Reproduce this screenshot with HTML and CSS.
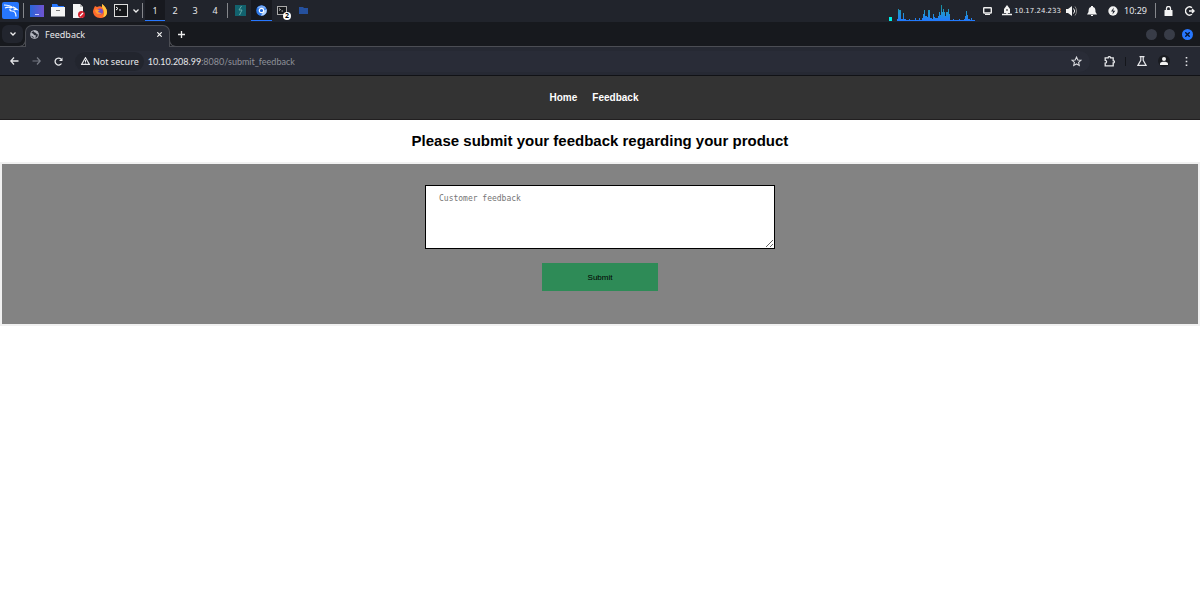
FILE: index.html
```
<!DOCTYPE html>
<html lang="en">
<head>
    <meta charset="UTF-8">
    <meta name="viewport" content="width=device-width, initial-scale=1.0">
    <title>Feedback</title>
    <link rel="stylesheet" href="styles.css">
</head>
<body>
    <!-- desktop panel -->
    <div class="panel">
        <button type="button" class="cell" aria-label="Applications">
            <svg width="17" height="17" viewBox="0 0 17 17"><rect width="17" height="17" rx="2" fill="#2777ff"/><path d="M2 3c3 0 6 0 8.500 2.500M3 6c2-1 5-1 7 0M9.500 5.500C7 7 7.500 9 10 9c2.500 0 4 2 4 5.500M10.500 5.500c2 0 3 .500 4.500 2-1.500-.300-2.500 0-3.500.500" fill="none" stroke="#fff" stroke-width="1.200"/><path d="M11 4l3.500 2.500-3-.3z" fill="#fff"/></svg>
        </button>
        <span class="divider"></span>
        <button type="button" class="cell" aria-label="Show desktop">
            <svg width="14" height="12" viewBox="0 0 14 12"><defs><linearGradient id="desk" x2="1"><stop stop-color="#2865d8"/><stop offset="1" stop-color="#7053d0"/></linearGradient></defs><rect width="14" height="12" fill="url(#desk)"/><path d="M5 9.500h4" stroke="#cfd5ff"/></svg>
        </button>
        <button type="button" class="cell" aria-label="Files">
            <svg width="14" height="13" viewBox="0 0 14 13"><path d="M1 0h5l1.500 2H13v4H1z" fill="#2777ff"/><path d="M0 3h14v9.500H0z" fill="#f4f4f4"/><path d="M5 6.500h4" stroke="#777"/></svg>
        </button>
        <button type="button" class="cell" aria-label="Text editor">
            <svg width="13" height="14" viewBox="0 0 13 14"><path d="M1 0h7l3 3v11H1z" fill="#f5f5f5"/><path d="M8 0v3h3" fill="#bbb"/><circle cx="9.500" cy="10.500" r="3.500" fill="#d5212e"/><path d="M8 12l3-3" stroke="#fff" stroke-width="1.200"/></svg>
        </button>
        <button type="button" class="cell" aria-label="Firefox">
            <svg width="14" height="14" viewBox="0 0 14 14"><path d="M1 4l1-2 2 1c2-1 4-1 5 0l0-3c3 2 5 5 5 8 0 4-3 6-7 6S0 11 0 7z" fill="#ff6b2c"/><path d="M9 0c3 2 5 5 5 8 0 3-2 5-4 5 2-3 1-7-1-10z" fill="#ffc63d"/><circle cx="7" cy="7.500" r="3" fill="#7351c7"/><path d="M2 6c2-1 3 0 5 0-1 1-2 1-2 2 2 1 3 1 4 1-3 3-7 0-7-3z" fill="#ff9b32"/></svg>
        </button>
        <button type="button" class="cell" aria-label="Terminal">
            <svg width="14" height="13" viewBox="0 0 14 13"><rect x=".5" y=".5" width="13" height="12" fill="#15171b" stroke="#dcdcdc"/><path d="M2 3l2 1.500L2 6M5 6h2" fill="none" stroke="#fff"/></svg>
        </button>
        <button type="button" class="more" aria-label="More terminals">
            <svg width="6" height="4" viewBox="0 0 6 4"><path d="M.5.500L3 3 5.500.500" fill="none" stroke="#eee" stroke-width="1.300"/></svg>
        </button>
        <span class="divider"></span>
        <button type="button" class="workspace active">1</button>
        <button type="button" class="workspace">2</button>
        <button type="button" class="workspace">3</button>
        <button type="button" class="workspace">4</button>
        <span class="divider"></span>
        <button type="button" class="task" aria-label="Burp Suite">
            <svg width="11" height="11" viewBox="0 0 11 11"><rect width="11" height="11" fill="#12626e"/><path d="M6.500 1L4 5h3L4.500 10" fill="none" stroke="#62a9a7"/></svg>
        </button>
        <button type="button" class="task active" aria-label="Chromium">
            <svg width="11" height="11" viewBox="0 0 11 11"><circle cx="5.500" cy="5.500" r="5.300" fill="#2d78e8"/><path d="M10.500 4a5.300 5.300 0 0 1-5.500 6.800L7.500 6z" fill="#b4d3fb"/><path d="M1 3A5.300 5.300 0 0 1 10.300 3.500H5.500z" fill="#75a9f5"/><circle cx="5.500" cy="5.500" r="2.200" fill="#1b62d8" stroke="#fff" stroke-width="1.200"/></svg>
        </button>
        <button type="button" class="task" aria-label="Terminal, 2 windows">
            <svg width="14" height="14" viewBox="0 0 14 14"><rect x="1.500" y="2.500" width="9" height="8" fill="#17191d" stroke="#aaa"/><path d="M3 4.500l1.500 1L3 6.500M5.500 7H7" fill="none" stroke="#ddd" stroke-width=".8"/></svg>
            <span class="badge">2</span>
        </button>
        <button type="button" class="task" aria-label="Folder">
            <svg width="9" height="7" viewBox="0 0 9 7"><path d="M0 0h4l1 1h4v6H0z" fill="#25509d"/></svg>
        </button>
        <div class="tray">
            <svg class="graph" width="88" height="16" viewBox="0 0 88 16"><defs><linearGradient id="cpu" x1="0" y1="0" x2="0" y2="16" gradientUnits="userSpaceOnUse"><stop stop-color="#168d9b"/><stop offset=".5" stop-color="#2196cf"/><stop offset="1" stop-color="#2278ff"/></linearGradient></defs><path d="M0 12h3v4H0z" fill="#00eee5"/><path d="M8 16v-2h1V4h1v1h2v9h2V8h1v6h2v1h3v-1h1v1h5v-2h1v2h3v-2h1v2h2v-2h1V9h1V5h1v6h2v1h1V5h2v8h2v1h1V9h1v3h1v1h3v-2h1V7h1v3h1V0h1v7h1V4h1v3h1v4h1V7h2V4h1v5h1v6h3v-1h1v1h5v-1h1v1h4v-1h1v-3h1V6h1v4h1v4h2v1h1v-2h1v2h3v1z" fill="url(#cpu)"/></svg>
            <button type="button" class="cell" aria-label="Display">
                <svg width="9" height="8" viewBox="0 0 9 8"><rect x=".7" y=".7" width="7.600" height="5.300" rx=".5" fill="none" stroke="#eee" stroke-width="1.400"/><path d="M2 7.500h5" stroke="#eee"/></svg>
            </button>
            <span class="network">
                <svg width="10" height="11" viewBox="0 0 10 11"><path d="M5 0l3 4v4H2V4z" fill="#f3f3f3"/><path d="M5 7v2M0 9.500h10" stroke="#f3f3f3" stroke-width="1.600"/><circle cx="5" cy="5" r="1" fill="#666"/></svg>
                <span>10.17.24.233</span>
            </span>
            <button type="button" class="cell" aria-label="Volume">
                <svg width="11" height="10" viewBox="0 0 11 10"><path d="M0 3h2l4-3v10L2 7H0z" fill="#f3f3f3"/><path d="M7.500 2.500a3.500 3.500 0 0 1 0 5" fill="none" stroke="#eee"/><path d="M9 .5c2 2.500 2 6.500 0 9" fill="none" stroke="#888"/></svg>
            </button>
            <button type="button" class="cell" aria-label="Notifications">
                <svg width="10" height="10" viewBox="0 0 10 10"><path d="M4 0h2v1c2 .5 2.500 2 2.500 5L10 8.500H0L1.500 6c0-3 .5-4.500 2.500-5zM4 9h2v1H4z" fill="#f3f3f3"/></svg>
            </button>
            <button type="button" class="cell" aria-label="Power">
                <svg width="10" height="10" viewBox="0 0 10 10"><circle cx="5" cy="5" r="4.700" fill="#f3f3f3"/><path d="M5.800 1.500L3 5.500h2l-.5 3L7.300 4.700H5.200z" fill="#222630"/></svg>
            </button>
            <time class="clock">10:29</time>
            <span class="divider"></span>
            <button type="button" class="cell" aria-label="Lock">
                <svg width="9" height="10" viewBox="0 0 9 10"><rect x=".5" y="4" width="8" height="6" rx=".5" fill="#f3f3f3"/><path d="M2.500 4V2.500a2 2 0 0 1 4 0V4" fill="none" stroke="#f3f3f3" stroke-width="1.300"/></svg>
            </button>
            <button type="button" class="cell" aria-label="Log out">
                <svg width="10" height="10" viewBox="0 0 10 10"><path d="M7 1.800A4 4 0 1 0 7 8.200M4 5h5M7 3l2 2-2 2" fill="none" stroke="#f3f3f3" stroke-width="1.400"/></svg>
            </button>
        </div>
    </div>

    <!-- browser tabs -->
    <div class="tabs">
        <button type="button" class="tab-search" aria-label="Search tabs">
            <svg width="6" height="4" viewBox="0 0 6 4"><path d="M.5.500L3 3 5.500.500" fill="none" stroke="#eee" stroke-width="1.300"/></svg>
        </button>
        <div class="tab">
            <svg width="9" height="9" viewBox="0 0 9 9"><circle cx="4.500" cy="4.500" r="4" fill="#272a35" stroke="#b8bbc4"/><path d="M1 3l2 .5 1 1.500 2 .5-1 3-2-2-2-1zM4 .5L4 2l2 1 1 1.500 1.500-.5L7 1z" fill="#b8bbc4"/></svg>
            <span class="tab-title">Feedback</span>
            <button type="button" class="icon-button" aria-label="Close tab">
                <svg width="5" height="5" viewBox="0 0 5 5"><path d="M.3.300l4.400 4.400M4.700.300L.3 4.700" stroke="#f2f2f2" stroke-width="1.200"/></svg>
            </button>
        </div>
        <button type="button" class="icon-button" aria-label="New tab">
            <svg width="7" height="7" viewBox="0 0 7 7"><path d="M3.500 0v7M0 3.500h7" stroke="#eee" stroke-width="1.300"/></svg>
        </button>
        <div class="window-buttons">
            <button type="button" class="round" aria-label="Minimize"></button>
            <button type="button" class="round" aria-label="Maximize"></button>
            <button type="button" class="round close" aria-label="Close">
                <svg width="5" height="5" viewBox="0 0 5 5"><path d="M.3.300l4.400 4.400M4.700.300L.3 4.700" stroke="#08152e" stroke-width="1.400"/></svg>
            </button>
        </div>
    </div>

    <!-- browser toolbar -->
    <div class="toolbar">
        <button type="button" class="tool" aria-label="Back">
            <svg width="9" height="8" viewBox="0 0 9 8"><path d="M8.500 4H1M4 .5L.8 4 4 7.500" fill="none" stroke="#e6e7ea" stroke-width="1.300"/></svg>
        </button>
        <button type="button" class="tool" aria-label="Forward">
            <svg width="9" height="8" viewBox="0 0 9 8"><path d="M.5 4H8M5 .5L8.200 4 5 7.500" fill="none" stroke="#777b85" stroke-width="1.200"/></svg>
        </button>
        <button type="button" class="tool" aria-label="Reload">
            <svg width="9" height="9" viewBox="0 0 9 9"><path d="M7.500 6.500A3.500 3.500 0 1 1 7 2" fill="none" stroke="#e6e7ea" stroke-width="1.300"/><path d="M8.500.500v3.500H5z" fill="#e6e7ea"/></svg>
        </button>
        <div class="address">
            <button type="button" class="security">
                <svg width="9" height="8" viewBox="0 0 9 8"><path d="M4.500.700L8.300 7.300H.7z" fill="none" stroke="#e6e7ea" stroke-width="1.200"/><path d="M4.500 3v2M4.500 5.500v1" stroke="#e6e7ea"/></svg>
                Not secure
            </button>
            <span class="url">10.10.208.99<span class="path">:8080/submit_feedback</span></span>
            <button type="button" class="icon-button" aria-label="Bookmark">
                <svg width="11" height="11" viewBox="0 0 10 10"><path d="M5 1l1.200 2.600 2.800.300-2.100 1.900.600 2.800L5 7.200 2.500 8.600l.600-2.800L1 3.900l2.800-.300z" fill="none" stroke="#d8d9dd" stroke-width="1"/></svg>
            </button>
        </div>
        <div class="tools">
            <button type="button" class="tool" aria-label="Extensions">
                <svg width="11" height="11" viewBox="0 0 11 11"><path d="M1.200 1.800h3a1.200 1.200 0 0 1 2.400 0h2.600v2.800a1.200 1.200 0 0 1 0 2.400v2.800H1.200V7.200a1.400 1.400 0 0 0 0-2.800z" fill="none" stroke="#e6e7ea" stroke-width="1.300"/></svg>
            </button>
            <span class="tool-line"></span>
            <button type="button" class="tool" aria-label="Labs">
                <svg width="10" height="10" viewBox="0 0 10 10"><path d="M2.500.700h5M3.800 1v3.300L1 9.300h8L6.200 4.300V1" fill="none" stroke="#e6e7ea" stroke-width="1.200"/></svg>
            </button>
            <button type="button" class="tool" aria-label="Profile">
                <svg width="12" height="12" viewBox="0 0 12 12"><circle cx="6" cy="6" r="6" fill="#191b20"/><circle cx="6" cy="4" r="2" fill="#f2f2f2"/><path d="M2 10V8.500C2 6 10 6 10 8.500V10z" fill="#f2f2f2"/></svg>
            </button>
            <button type="button" class="tool" aria-label="Menu">
                <svg width="3" height="9" viewBox="0 0 3 9"><path d="M.7 0h1.600v1.600H.7zM.7 3.700h1.600v1.600H.7zM.7 7.400h1.600V9H.7z" fill="#e6e7ea"/></svg>
            </button>
        </div>
    </div>

    <nav class="navbar">
        <a href="/">Home</a>
        <a href="/submit_feedback">Feedback</a>
    </nav>
    <main>
        <h1>Please submit your feedback regarding your product</h1>
        <form class="feedback-form" action="/submit_feedback" method="post">
            <textarea name="feedback" placeholder="Customer feedback" aria-label="Customer feedback"></textarea>
            <button type="submit" class="submit-button">Submit</button>
        </form>
    </main>
</body>
</html>
```
FILE: styles.css
```
* {
    box-sizing: border-box;
}
body {
    font-family: "Liberation Sans", Arial, sans-serif;
    background-color: white;
    margin: 0;
}
button {
    border: none;
    background: none;
    padding: 0;
    color: inherit;
    font: inherit;
}
svg {
    display: block;
    flex-shrink: 0;
}
.panel, .tabs, .toolbar {
    display: flex;
    align-items: center;
    font-family: "Noto Sans", sans-serif;
    font-size: 9px;
    color: #e6e7ea;
}
.panel {
    height: 22px;
    padding-bottom: 1px;
    background-color: #21242c;
}
.cell, .task, .workspace, .tool, .icon-button, .more {
    display: flex;
    align-items: center;
    justify-content: center;
    height: 21px;
}
.cell {
    width: 21px;
}
.more {
    width: 9px;
}
.divider {
    width: 1px;
    height: 15px;
    margin: 0 2px;
    background-color: #85878c;
}
.workspace {
    width: 20px;
}
.task {
    width: 21px;
    position: relative;
}
.workspace.active, .task.active {
    background-color: #17191f;
    box-shadow: inset 0 -1px #2777ff;
}
.badge {
    position: absolute;
    right: 2px;
    bottom: 1px;
    width: 8px;
    height: 8px;
    border-radius: 50%;
    background-color: white;
    color: black;
    font-size: 7px;
    font-weight: bold;
    line-height: 8px;
    text-align: center;
}
.tray {
    display: flex;
    align-items: center;
    margin-left: auto;
}
.graph {
    align-self: flex-end;
}
.network {
    display: flex;
    align-items: center;
    gap: 2px;
    margin-left: 4px;
    font-family: "DejaVu Sans", sans-serif;
    font-size: 7px;
}
.clock {
    font-size: 9px;
    margin-right: 6px;
}
.tabs {
    height: 24px;
    gap: 2px;
    padding: 0 7px 0 2px;
    background-color: #17191e;
}
.tab-search {
    display: flex;
    align-items: center;
    justify-content: center;
    width: 21px;
    height: 18px;
    border-radius: 6px;
    background-color: #22252e;
}
.tab {
    position: relative;
    display: flex;
    align-items: center;
    gap: 6px;
    align-self: flex-end;
    width: 145px;
    height: 22px;
    margin-bottom: -1px;
    padding: 0 0 4px 4px;
    border: 1px solid #4b4d54;
    border-bottom: none;
    border-radius: 7px 7px 0 0;
    background-color: #262933;
}
.tab::before, .tab::after {
    content: "";
    position: absolute;
    bottom: 0;
    width: 7px;
    height: 7px;
    border-bottom: 1px solid #4b4d54;
}
.tab::before {
    right: 100%;
    border-right: 1px solid #4b4d54;
    border-bottom-right-radius: 7px;
}
.tab::after {
    left: 100%;
    border-left: 1px solid #4b4d54;
    border-bottom-left-radius: 7px;
}
.tab-title {
    flex: 1;
}
.icon-button {
    width: 19px;
}
.window-buttons {
    display: flex;
    gap: 7px;
    margin-left: auto;
}
.round {
    display: flex;
    align-items: center;
    justify-content: center;
    width: 11px;
    height: 11px;
    border-radius: 50%;
    background-color: #383c47;
}
.round.close {
    background-color: #2777ff;
}
.toolbar {
    height: 30px;
    padding: 0 3px;
    border-top: 1px solid #4b4d54;
    border-bottom: 1px solid #111216;
    background-color: #262933;
}
.tool {
    width: 22px;
}
.address {
    display: flex;
    flex: 1;
    align-items: center;
    height: 21px;
    margin-left: 6px;
    padding-right: 4px;
    border-radius: 11px;
    background-color: #292c37;
}
.security {
    display: flex;
    align-items: center;
    gap: 3px;
    height: 19px;
    padding: 0 5px 0 6px;
    border-radius: 10px;
    background-color: #22252e;
}
.url {
    flex: 1;
    margin-left: 4px;
    font-family: Lato, sans-serif;
}
.path {
    color: #8e9199;
}
.tools {
    display: flex;
    align-items: center;
    margin-left: 8px;
}
.tool-line {
    width: 1px;
    height: 9px;
    margin: 0 5px;
    background-color: #14161b;
}
.navbar {
    display: flex;
    justify-content: center;
    gap: 15px;
    padding: 15px 12px 15px 0;
    border-bottom: 1px solid #211f20;
    background-color: #333;
    font-size: 10px;
    font-weight: bold;
    line-height: 13px;
}
.navbar a {
    color: white;
    text-decoration: none;
}
h1 {
    margin: 0;
    padding: 12px 0;
    font-size: 15px;
    line-height: 18px;
    text-align: center;
}
.feedback-form {
    display: flex;
    flex-direction: column;
    align-items: center;
    gap: 14px;
    padding: 21px 20px 33px;
    border: 2px solid #f1f1f1;
    background-color: #838383;
}
textarea {
    width: 100%;
    max-width: 350px;
    height: 64px;
    padding: 7px 13px;
    border: 1px solid black;
    font-family: "DejaVu Sans Mono", monospace;
    font-size: 8px;
    line-height: 11px;
}
textarea::placeholder {
    color: #757575;
}
.submit-button {
    width: 116px;
    height: 28px;
    background-color: seagreen;
    color: black;
    font-size: 8px;
}
```
